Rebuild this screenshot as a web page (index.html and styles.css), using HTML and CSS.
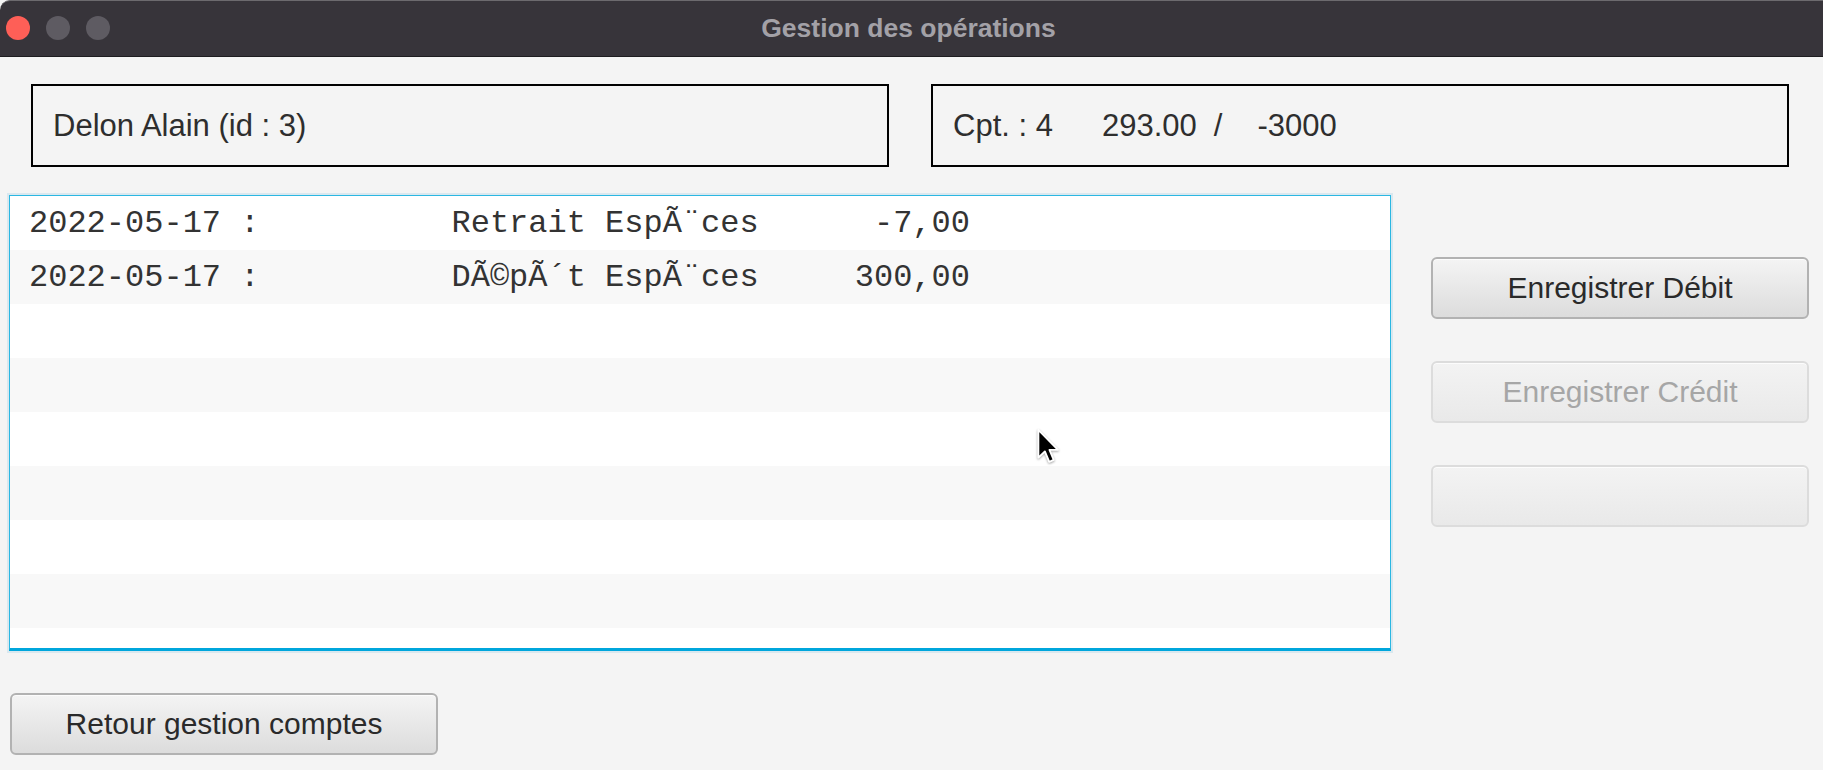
FILE: index.html
```html
<!DOCTYPE html>
<html lang="fr">
<head>
<meta charset="utf-8">
<title>Gestion des opérations</title>
<link rel="stylesheet" href="styles.css">
</head>
<body>
<div class="window">
  <div class="titlebar">
    <div class="lights">
      <span class="light red"></span>
      <span class="light gray"></span>
      <span class="light gray"></span>
    </div>
    <div class="title">Gestion des opérations</div>
  </div>
  <div class="main">
    <div class="header">
      <div class="infobox"><span>Delon Alain (id : 3)</span></div>
      <div class="infobox"><span>Cpt. : 4</span><span class="solde">293.00</span><span class="slash">/</span><span class="decouvert">-3000</span></div>
    </div>
    <div class="middle">
      <div class="list">
        <div class="row">2022-05-17 :          Retrait EspÃ¨ces      -7,00</div>
        <div class="row">2022-05-17 :          DÃ©pÃ´t EspÃ¨ces     300,00</div>
        <div class="row"></div>
        <div class="row"></div>
        <div class="row"></div>
        <div class="row"></div>
        <div class="row"></div>
        <div class="row"></div>
      </div>
      <div class="side">
        <button class="btn">Enregistrer Débit</button>
        <button class="btn disabled">Enregistrer Crédit</button>
        <button class="btn disabled"></button>
      </div>
    </div>
    <div class="footer">
      <button class="btn back">Retour gestion comptes</button>
    </div>
  </div>
  <svg class="cursor" width="26" height="38" viewBox="0 0 22 32">
    <path d="M2 1.5 L2 25 L7.5 19.8 L11.2 28.5 L15 26.9 L11.4 18.4 L18.6 18.4 Z" fill="#000" stroke="#fff" stroke-width="1.6" stroke-linejoin="round"/>
  </svg>
</div>
</body>
</html>
```
FILE: styles.css
```css
html, body {
  margin: 0;
  padding: 0;
}
body {
  width: 1823px;
  height: 770px;
  overflow: hidden;
  background: #f4f4f4;
  font-family: "Liberation Sans", Arial, sans-serif;
}
.window {
  position: relative;
  width: 1823px;
  height: 770px;
  background: #f4f4f4;
}
.titlebar {
  position: relative;
  background: #37343a;
  border-top: 1px solid #6c6a6e;
  border-bottom: 1px solid #1e1d20;
  border-top-left-radius: 10px;
  box-sizing: border-box;
  height: 57px;
  display: flex;
  align-items: center;
  justify-content: center;
}
.lights {
  position: absolute;
  left: 6px;
  top: 15px;
  display: flex;
  gap: 16px;
}
.light {
  width: 24px;
  height: 24px;
  border-radius: 50%;
  display: block;
}
.light.red { background: #fe5f57; }
.light.gray { background: #5e5b62; }
.title {
  color: #a3a1a7;
  font-weight: bold;
  font-size: 26.5px;
  margin-left: -6px;
}
.main {
  padding-left: 9px;
}
.header {
  display: flex;
  gap: 42px;
  margin-top: 27px;
  margin-left: 22px;
}
.infobox {
  width: 858px;
  height: 83px;
  box-sizing: border-box;
  border: 2px solid #000;
  display: flex;
  align-items: center;
  padding-left: 20px;
  font-size: 31px;
  color: #2e2e2e;
}
.solde { margin-left: 49px; }
.slash { margin-left: 17px; }
.decouvert { margin-left: 35px; }
.middle {
  display: flex;
  margin-top: 28px;
}
.list {
  width: 1382px;
  height: 456px;
  box-sizing: border-box;
  background: #fff;
  border: 1px solid #2bb7e2;
  border-bottom: 3px solid #00a6dc;
  box-shadow: 0 0 0 2px #d9e8ef;
  overflow: hidden;
}
.row {
  height: 54px;
  box-sizing: border-box;
  padding-left: 19px;
  display: flex;
  align-items: center;
  white-space: pre;
  font-family: "Liberation Mono", "Courier New", monospace;
  font-size: 32px;
  color: #333;
}
.row:nth-child(even) {
  background: #f8f8f8;
}
.side {
  display: flex;
  flex-direction: column;
  gap: 42px;
  margin-left: 40px;
  padding-top: 62px;
}
.btn {
  width: 378px;
  height: 62px;
  box-sizing: border-box;
  border: 2px solid #b2b2b2;
  border-radius: 6px;
  background: linear-gradient(#f4f4f4, #dcdcdc);
  box-shadow: inset 0 1px 0 #fcfcfc;
  font-family: "Liberation Sans", Arial, sans-serif;
  font-size: 30px;
  color: #2a2a2a;
  padding: 0;
  margin: 0;
}
.btn.disabled {
  border-color: #dcdcdc;
  background: linear-gradient(#f3f3f3, #e9e9e9);
  color: #a6a6a6;
}
.footer {
  margin-top: 42px;
}
.btn.back {
  width: 428px;
  margin-left: 1px;
}
.cursor {
  position: absolute;
  left: 1036px;
  top: 428px;
  filter: drop-shadow(0 1px 1px rgba(0,0,0,0.35));
}
```
